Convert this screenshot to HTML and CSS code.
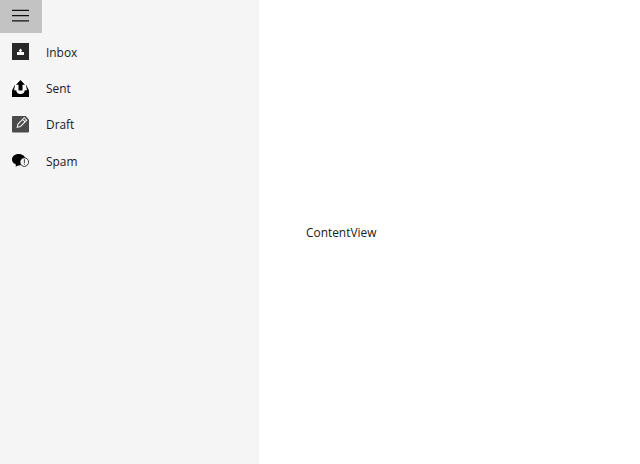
FILE: index.html
```html
<!DOCTYPE html>
<html lang="en">
<head>
<meta charset="utf-8">
<title>Mail</title>
<link rel="stylesheet" href="styles.css">
</head>
<body>
<div class="app">
  <nav class="drawer">
    <button class="menu-button" aria-label="Menu"><svg class="menu-icon" viewBox="0 0 17 13"><path fill="#111" d="M0 .8h17v1.300H0zM0 5.900h17v1.300H0zM0 11.200h17v1.300H0z"/></svg></button>
    <ul class="items">
      <li class="item">
        <svg class="icon inbox-icon" viewBox="0 0 17 17"><path fill="#292829" d="M0 0h17v17H0z"/><path fill="#fff" d="M5 9h7v3H5zM8.500 5.500l1.900 2.200H9.500V9h-2V7.700h-.9z"/></svg>
        <span class="label">Inbox</span>
      </li>
      <li class="item">
        <svg class="icon" viewBox="0 0 17 17"><path fill="#fff" d="M0 0h17v17H0z"/><path d="M3.300 4h10.400L17 10.500V17H0v-6.500z"/><path fill="#fff" d="M3 4h11v1.500l1 4.700h-2.200c-.2 2.300-1.700 3.700-4.300 3.700s-4.100-1.400-4.300-3.700H2l1-4.700z"/><path d="M8.500 0 13 4.700h-2.500v5.800h-4V4.700H4z"/></svg>
        <span class="label">Sent</span>
      </li>
      <li class="item draft">
        <svg class="icon" viewBox="0 0 17 17"><path fill="#4b4b4b" d="M1 0h12.500L17 3.500V15.500q0 1-1 1H1q-1 0-1-1V1q0-1 1-1z"/><path fill="#4b4b4b" stroke="#eee" stroke-width="1.100" d="M5.300 11.200 6 8l6.200-6.300 2.500 2.500-6.200 6.300zM10.600 3.400l2.500 2.500"/></svg>
        <span class="label">Draft</span>
      </li>
      <li class="item">
        <svg class="icon" viewBox="0 0 17 17"><path d="M6.500 1c4.200 0 7 2.400 7 5.500s-3 6-6.800 6H6l-2.300 1.300.2-2.200C1.400 10.600 0 8.700 0 6.600 0 3.400 2.900 1 6.500 1z"/><circle cx="12.300" cy="9.100" r="4.300" fill="#f5f5f5" stroke="#111" stroke-width=".8"/><path fill="#333" d="M11.900 6.200h.9v3.800h-.9zM11.900 10.600h.9v.9h-.9z"/></svg>
        <span class="label">Spam</span>
      </li>
    </ul>
  </nav>
  <main class="content"><span class="label">ContentView</span></main>
</div>
</body>
</html>
```
FILE: styles.css
```css
* { box-sizing: border-box; }
body {
  margin: 0;
  background: #fff;
  color: #1a1a1a;
  font: 13px/18px "Open Sans", "Noto Sans", sans-serif;
}
.app { display: flex; height: 464px; }
.drawer { width: 259px; background: #f5f5f5; }
.menu-button {
  display: flex;
  width: 41.5px;
  height: 33px;
  padding: 9px 12px 0;
  border: 0;
  background: #c3c3c3;
}
.menu-icon { width: 17px; height: 13px; flex: none; }
.items { margin: 0; padding: 1px 0 0; list-style: none; }
.item {
  display: flex;
  align-items: center;
  gap: 17px;
  height: 36.300px;
  padding-left: 12px;
}
.label { display: inline-block; transform: scaleX(0.915); transform-origin: left center; }
.icon { width: 17px; height: 17px; }
.inbox-icon { margin-top: -1px; }
.draft { padding-bottom: 1px; }
.content { padding: 223px 0 0 47px; }
```
